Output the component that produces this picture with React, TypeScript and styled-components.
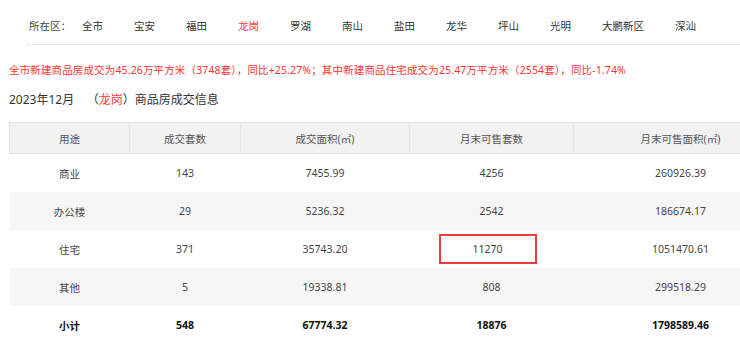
import React from 'react'
import styled, { createGlobalStyle } from 'styled-components'

const GlobalStyle = createGlobalStyle`
	body {
		margin: 0;
		background: #fff;
		overflow: hidden;
		font-family: "Noto Sans", "Noto Sans CJK SC", sans-serif;
	}
`

const Page = styled.div`
	width: 740px;
	overflow: hidden;
`
const Nav = styled.div`
	display: flex;
	align-items: center;
	height: 38px;
	padding: 6px 0 0 3px;
	margin-left: 26px;
	border-bottom: 1px solid #e8e8e8;
	font-size: 10.5px;
	color: #333;
	white-space: nowrap;
`
const NavLabel = styled.span`
	margin-right: 11px;
	color: #444;
`
const NavItem = styled.span<{ $active?: boolean }>`
	margin-right: 31px;
	color: ${p => (p.$active ? '#ff3a3a' : '#333')};
`
const Notice = styled.p`
	margin: 17px 0 0 9px;
	line-height: 16px;
	font-size: 10.5px;
	letter-spacing: 0.14px;
	color: #ff3333;
	white-space: nowrap;
`
const Title = styled.h3`
	margin: 13px 0 0 9px;
	line-height: 18px;
	font-size: 12px;
	font-weight: normal;
	color: #333;
`
const Red = styled.span`
	color: #ff3a3a;
`
const Table = styled.table`
	margin: 13px 0 0 9px;
	width: 778px;
	table-layout: fixed;
	border-collapse: collapse;
	font-size: 10.5px;
`
const Th = styled.th`
	height: 30px;
	padding: 0;
	background: #f2f2f2;
	border: 1px solid #e4e4e4;
	font-weight: normal;
	color: #555;
	text-align: center;
`
const Tr = styled.tr<{ $shade?: boolean }>`
	background: ${p => (p.$shade ? '#f6f6f6' : '#fff')};
`
const Td = styled.td<{ $bold?: boolean }>`
	height: 38px;
	padding: 0;
	text-align: center;
	color: ${p => (p.$bold ? '#111' : '#444')};
	font-weight: ${p => (p.$bold ? 'bold' : 'normal')};
`
// red box drawn round the highlighted figure
const Mark = styled.div`
	margin: 0 auto;
	width: 98px;
	height: 30px;
	line-height: 26px;
	border: 2px solid #f03c3c;
	box-sizing: border-box;
	position: relative;
	left: -4px;
`

const districts = ['全市', '宝安', '福田', '龙岗', '罗湖', '南山', '盐田', '龙华', '坪山', '光明', '大鹏新区', '深汕']
const widths = [120, 111, 169, 164, 214]
const heads = ['用途', '成交套数', '成交面积(㎡)', '月末可售套数', '月末可售面积(㎡)']
const rows = [
	['商业', '143', '7455.99', '4256', '260926.39'],
	['办公楼', '29', '5236.32', '2542', '186674.17'],
	['住宅', '371', '35743.20', '11270', '1051470.61'],
	['其他', '5', '19338.81', '808', '299518.29'],
]
const total = ['小计', '548', '67774.32', '18876', '1798589.46']

export default function App() {
	return (
		<Page>
			<GlobalStyle />
			<Nav>
				<NavLabel>所在区：</NavLabel>
				{districts.map(d => (
					<NavItem key={d} $active={d === '龙岗'}>{d}</NavItem>
				))}
			</Nav>
			<Notice>
				全市新建商品房成交为45.26万平方米（3748套），同比+25.27%；其中新建商品住宅成交为25.47万平方米（2554套），同比-1.74%
			</Notice>
			<Title>
				2023年12月&nbsp;&nbsp;&nbsp;&nbsp;（<Red>龙岗</Red>）商品房成交信息
			</Title>
			<Table>
				<colgroup>
					{widths.map((w, i) => <col key={i} style={{ width: w }} />)}
				</colgroup>
				<thead>
					<tr>{heads.map(h => <Th key={h}>{h}</Th>)}</tr>
				</thead>
				<tbody>
					{rows.map((r, i) => (
						<Tr key={r[0]} $shade={i % 2 === 1}>
							{r.map((c, j) =>
								<Td key={j}>{c === '11270' ? <Mark>{c}</Mark> : c}</Td>
							)}
						</Tr>
					))}
					<Tr>
						{total.map((c, j) => <Td key={j} $bold>{c}</Td>)}
					</Tr>
				</tbody>
			</Table>
		</Page>
	)
}
